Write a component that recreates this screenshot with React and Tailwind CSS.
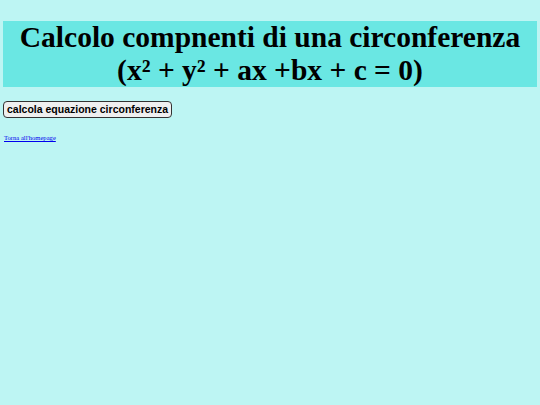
export default function App() {
    return (
        <div className="min-h-[405px] w-full bg-[#bdf5f3] pt-[21px] px-[3px]" style={{ fontFamily: '"Liberation Serif", serif' }}>
            {/* Title box */}
            <div className="bg-[#6ae7e3] h-[66px] flex items-center justify-center">
                <h1 className="text-[29.5px] leading-[33px] font-bold text-black text-center">
                    Calcolo compnenti di una circonferenza<br />
                    (x² + y² + ax +bx + c = 0)
                </h1>
            </div>

            <div className="mt-[14px] flex">
                <button className="px-[3px] h-[17px] text-[10.5px] leading-[13px] font-bold text-black bg-[#efefef] border border-[#333] rounded-[4px]"
                    style={{ fontFamily: '"Liberation Sans", Arial, sans-serif' }}>
                    calcola equazione circonferenza
                </button>
            </div>

            <div className="mt-[15px] pl-px flex">
                <a href="#" className="text-[6.6px] leading-[9px] text-[#0000ee] underline">Torna all'homepage</a>
            </div>
        </div>
    );
}
